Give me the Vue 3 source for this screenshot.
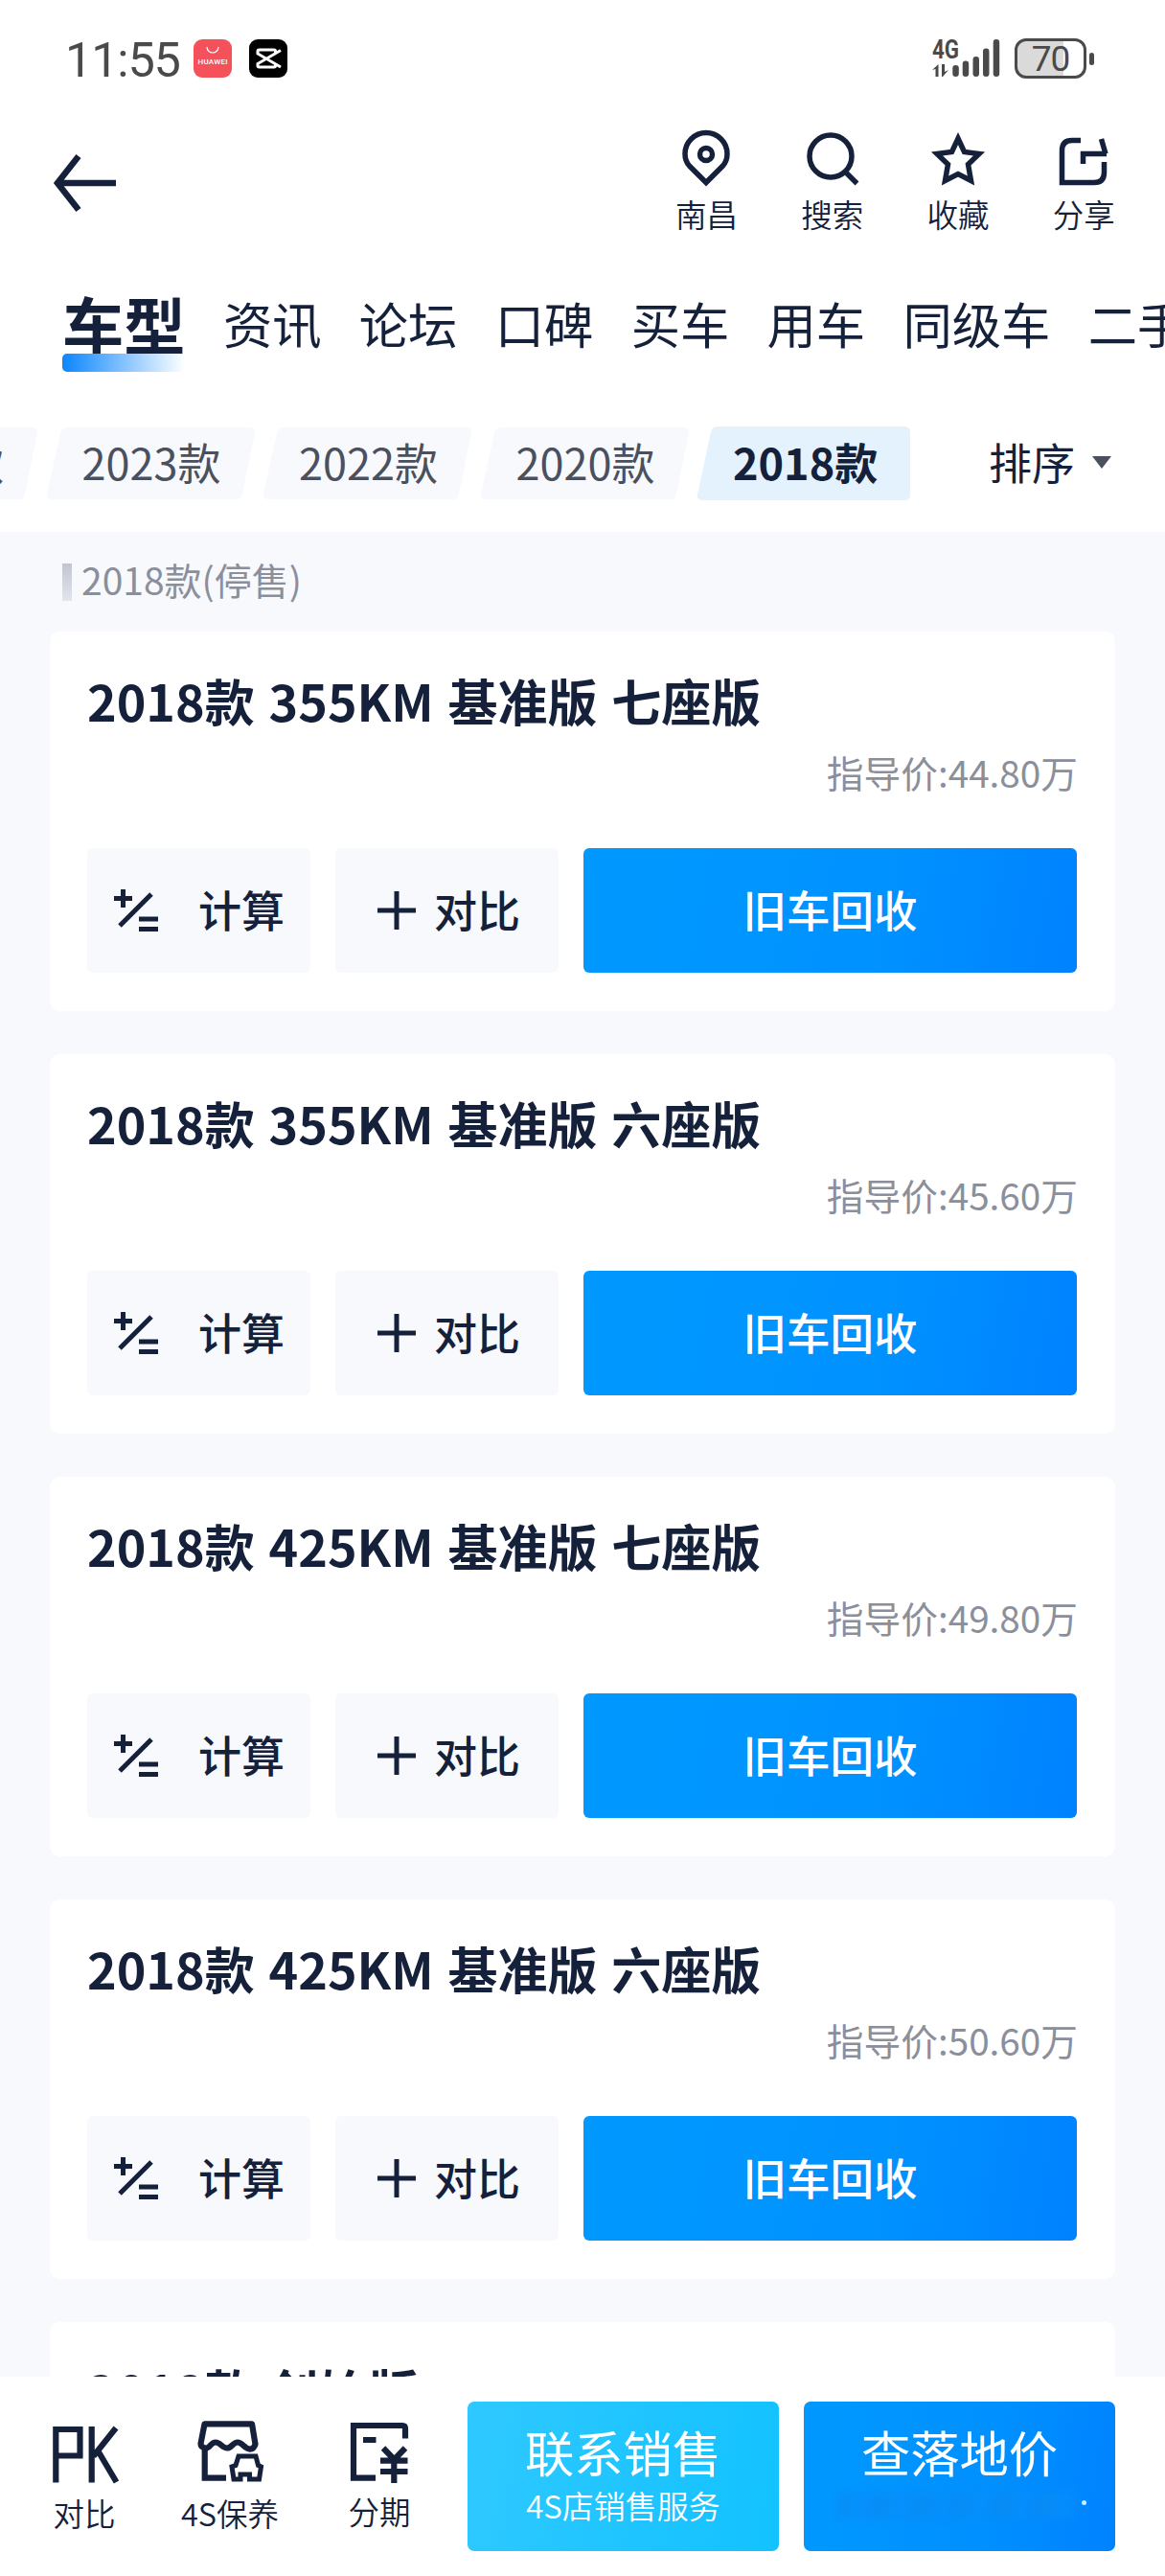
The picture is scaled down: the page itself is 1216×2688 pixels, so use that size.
<template>
  <div class="phone">
    <div class="status-bar">
      <div class="status-left">
        <span class="time">11:55</span>
        <svg class="app-icon" viewBox="0 0 40 40">
          <rect width="40" height="40" rx="9" fill="#f4515a" />
          <path d="M14 8a6 6 0 0 0 12 0" fill="none" stroke="#fff" stroke-width="1.2" />
          <text x="20" y="25.5" text-anchor="middle" textLength="31" class="huawei-text">HUAWEI</text>
        </svg>
        <svg class="app-icon second" viewBox="0 0 40 40">
          <rect width="40" height="40" rx="9" fill="#000" />
          <path d="M33 11.5L9 25.500V27.500Q9 29 10.500 29H26Q27.500 29 27.500 27.500V26M33 29L9 15V12.500Q9 11 10.500 11H26Q27.500 11 27.500 12.500V14" fill="none" stroke="#fff" stroke-width="3" />
        </svg>
      </div>
      <div class="status-right">
        <svg class="signal" viewBox="0 0 72 42">
          <text x="0" y="21" textLength="28" lengthAdjust="spacingAndGlyphs" class="net-text">4G</text>
          <path d="M0 33l6.500-6v13h-3v-8zM10 27h3v8l4-2-6 7h-1z" fill="#4a4a4a" />
          <rect x="21.300" y="28" width="6.500" height="12" rx="3.200" />
          <rect x="31.700" y="23.500" width="6.500" height="16.500" rx="3.200" />
          <rect x="42.500" y="19" width="6.500" height="21" rx="3.200" />
          <rect x="53" y="10.500" width="6.500" height="29.500" rx="3.200" />
          <rect x="63.700" y="1" width="6.500" height="39" rx="3.200" />
        </svg>
        <div class="battery">70</div>
        <i class="battery-nub"></i>
      </div>
    </div>

    <div class="nav-bar">
      <svg class="back" viewBox="0 0 68 60">
        <path d="M66 30H5M27 2L5 30l22 28" fill="none" stroke="#15203a" stroke-width="6.500" />
      </svg>
      <div class="nav-actions">
        <div class="nav-item">
          <svg viewBox="0 0 60 60">
            <path d="M30 54.500L12.500 37Q8 32 8 24.500a22 22 0 0 1 44 0Q52 32 47.500 37z" />
            <circle cx="30" cy="25" r="6.500" />
          </svg>
          <span>南昌</span>
        </div>
        <div class="nav-item">
          <svg viewBox="0 0 60 60">
            <circle cx="28" cy="27" r="22" />
            <path d="M43 43l12.500 12.500" />
          </svg>
          <span>搜索</span>
        </div>
        <div class="nav-item">
          <svg viewBox="0 0 60 60">
            <path d="M30 8.500l6.500 14 15.500 2-11.500 11 3 17L30 45.500l-13.500 7 3-17L8 24.500l15.500-2z" />
          </svg>
          <span>收藏</span>
        </div>
        <div class="nav-item">
          <svg viewBox="0 0 60 60">
            <path d="M27 10.500H18Q7.500 10.500 7.500 21v33.500H41Q51.500 54.500 51.500 44V33M29.500 35V24.500H54M48.500 9l4.500 15.500" />
          </svg>
          <span>分享</span>
        </div>
      </div>
    </div>

    <div class="tabs">
      <div
        v-for="tab in tabs"
        :key="tab"
        class="tab"
        :class="{ active: currentTab === tab }"
        @click="currentTab = tab">
        <span>{{ tab }}</span>
      </div>
    </div>

    <div class="filter-bar">
      <div class="years">
        <div
          v-for="year in years"
          :key="year"
          class="year"
          :class="{ active: currentYear === year }"
          @click="currentYear = year">
          <svg class="year-bg" viewBox="0 0 223 77">
            <path v-if="currentYear === year" d="M22 0H217Q223 0 223 6V71Q223 77 217 77H6Q0 77 1 71L15 6Q16 0 22 0z" />
            <path v-else d="M22 1H213Q219 1 218 7L205 70Q204 76 198 76H6Q0 76 1 70L15 7Q16 1 22 1z" />
          </svg>
          <span>{{ year }}</span>
        </div>
      </div>
      <div class="sort">
        <span>排序</span>
        <i class="caret"></i>
      </div>
    </div>

    <div class="list">
      <div class="group-title"><i></i><span>2018款(停售)</span></div>
      <div v-for="car in cars" :key="car.name" class="card">
        <h3>{{ car.name }}</h3>
        <div class="price">指导价:{{ car.price }}万</div>
        <div class="card-actions">
          <button class="btn-light">
            <svg class="calc" viewBox="0 0 46 46">
              <path d="M0 10.500h19M9.500 1v19M6 39L39 6M26 32h20M26 42.500h20" />
            </svg>
            <span>计算</span>
          </button>
          <button class="btn-light compare">
            <svg class="plus" viewBox="0 0 40 40">
              <path d="M0 20h40M20 0v40" />
            </svg>
            <span>对比</span>
          </button>
          <button class="btn-blue"><span>旧车回收</span></button>
        </div>
      </div>
    </div>

    <div class="bottom-bar">
      <div class="tool pk">
        <svg viewBox="0 0 70 68">
          <path d="M5.300 67.500V12H30.500v27.500H5.300M42.700 9v58.500M68 10.500L44.500 40M49 34l19.500 33" />
        </svg>
        <span>对比</span>
      </div>
      <div class="tool shop">
        <svg viewBox="0 0 70 68">
          <path d="M8.500 6.300H58L61.500 27.500Q60 33 55 32.500C50 31.500 48 25.500 43 25.500S37 31.500 32 31.500 25 25.500 20 25.500 14 32 10 31.500Q4.500 31 4.500 27z" stroke-linejoin="round" />
          <path d="M8.700 31v31.700H31" />
          <path d="M44 40h18l2.500 9.500 3 1.500-2 13H55.500v-5H46v5h-7l-2-13 4-1.500z" stroke-width="5" />
        </svg>
        <span>4S保养</span>
      </div>
      <div class="tool stage">
        <svg viewBox="0 0 70 68">
          <path d="M31 62.700H8V8H59q3 0 3 3v10.500M18 23h13.500M39 31.500l11.500 12 11.500-12M36 44.700h28.500M36 56h28.500M50.300 43v25" />
        </svg>
        <span>分期</span>
      </div>
      <button class="cta cyan">
        <b>联系销售</b>
        <small>4S店销售服务</small>
      </button>
      <button class="cta blue">
        <b>查落地价</b>
        <span class="sub-line"><i class="smudge"></i><i class="speck"></i></span>
      </button>
    </div>
  </div>
</template>

<script setup>
import { ref } from 'vue'

const currentTab = ref('车型')
const currentYear = ref('2018款')

const tabs = ['车型', '资讯', '论坛', '口碑', '买车', '用车', '同级车', '二手车']
const years = ['2024款', '2023款', '2022款', '2020款', '2018款']

const cars = [
  { name: '2018款 355KM 基准版 七座版', price: '44.80' },
  { name: '2018款 355KM 基准版 六座版', price: '45.60' },
  { name: '2018款 425KM 基准版 七座版', price: '49.80' },
  { name: '2018款 425KM 基准版 六座版', price: '50.60' },
  { name: '2018款 创始版', price: '62.80' }
]
</script>

<style>
body {
  margin: 0;
  background: #fff;
}
</style>

<style scoped>
* {
  box-sizing: border-box;
}
.phone {
  width: 1216px;
  height: 2688px;
  overflow: hidden;
  display: flex;
  flex-direction: column;
  background: #fff;
  color: #15203a;
  font-family: "Noto Sans CJK SC", sans-serif;
}
svg {
  display: block;
  overflow: visible;
  flex-shrink: 0;
}
button {
  border: none;
  padding: 0;
  font-family: inherit;
  color: inherit;
  cursor: pointer;
}
.status-bar {
  height: 122px;
  flex-shrink: 0;
  padding: 0 74px 0 68px;
  display: flex;
  align-items: center;
  justify-content: space-between;
  color: #4a4a4a;
}
.status-left, .status-right {
  display: flex;
  align-items: center;
}
.time {
  width: 134px;
  padding-top: 3px;
  font-family: Roboto, sans-serif;
  font-size: 50.5px;
  line-height: 60px;
  letter-spacing: -1.2px;
}
.app-icon {
  width: 40px;
  height: 40px;
}
.app-icon.second {
  margin-left: 18px;
}
.huawei-text {
  font: 500 8px Roboto, sans-serif;
  fill: #fff;
}
.signal {
  width: 72px;
  height: 42px;
  fill: #4a4a4a;
}
.net-text {
  font: 700 27px Roboto, sans-serif;
}
.battery {
  width: 75px;
  height: 42px;
  margin-left: 14px;
  border: 3.5px solid #4a4a4a;
  border-radius: 12px;
  background: linear-gradient(90deg, #dadada 69%, #fff 69%);
  font: 400 37px/37px Roboto, sans-serif;
  letter-spacing: -1px;
  text-align: center;
}
.battery-nub {
  width: 5px;
  height: 13px;
  margin-left: 3px;
  border-radius: 3px;
  background: #4a4a4a;
}
.nav-bar {
  height: 158px;
  flex-shrink: 0;
  padding: 8px 19px 0 55px;
  display: flex;
  justify-content: space-between;
}
.back {
  width: 68px;
  height: 60px;
  margin-top: 31px;
}
.nav-actions {
  display: flex;
}
.nav-item {
  width: 131.3px;
  display: flex;
  flex-direction: column;
  align-items: center;
}
.nav-item svg {
  width: 60px;
  height: 60px;
  margin-top: 6px;
  fill: none;
  stroke: #15203a;
  stroke-width: 5.5;
}
.nav-item span {
  margin-top: 4px;
  font-size: 32.5px;
  font-weight: 350;
  line-height: 46px;
}
.tabs {
  height: 150px;
  flex-shrink: 0;
  padding: 17px 0 0 65px;
  display: flex;
  gap: 39.3px;
  white-space: nowrap;
}
.tab {
  font-size: 51.3px;
  line-height: 80px;
  flex-shrink: 0;
}
.tab.active {
  font-size: 64.3px;
  font-weight: 700;
}
.tab.active::after {
  content: "";
  display: block;
  position: relative;
  top: -8px;
  width: 128px;
  height: 19px;
  border-radius: 5px;
  background: linear-gradient(90deg, #0a86ff, #fff);
}
.filter-bar {
  height: 125px;
  flex-shrink: 0;
  padding-top: 15px;
  display: flex;
}
.years {
  width: 950px;
  display: flex;
  justify-content: flex-end;
  gap: 3.5px;
}
.year {
  width: 223px;
  height: 77px;
  flex-shrink: 0;
  display: grid;
  color: #4b505f;
  font-size: 45px;
  line-height: 73px;
}
.year-bg, .year span {
  grid-area: 1 / 1;
}
.year span {
  padding-left: 38px;
}
.year-bg {
  width: 223px;
  height: 77px;
  fill: #f7f9fd;
}
.year.active {
  color: #15203a;
  font-weight: 700;
}
.year.active .year-bg {
  fill: #e4f2fe;
}
.sort {
  height: 73px;
  margin-left: 82px;
  display: flex;
  align-items: center;
  font-size: 45px;
}
.caret {
  margin: 2px 0 0 18px;
  border: 10px solid transparent;
  border-top: 13px solid #4b505f;
  border-bottom: none;
}
.list {
  flex: 1;
  min-height: 0;
  overflow: hidden;
  padding: 0 52px;
  background: #f7f9fd;
}
.group-title {
  height: 104px;
  padding-left: 13px;
  display: flex;
  align-items: center;
  color: #8b8f9c;
  font-size: 39px;
}
.group-title i {
  width: 10px;
  height: 39px;
  margin-right: 10px;
  background: linear-gradient(#c2c5d0, #e3e5ec);
}
.group-title span {
  margin-bottom: 7px;
}
.card {
  height: 396px;
  margin-bottom: 45px;
  padding: 35px 39px 0;
  border-radius: 10px;
  background: #fff;
}
h3 {
  margin: 0;
  font-size: 52px;
  font-weight: 700;
  line-height: 74px;
  word-spacing: 3px;
  white-space: nowrap;
}
.price {
  margin-top: 9px;
  color: #8b8f9c;
  font-size: 38.7px;
  line-height: 56px;
  text-align: right;
}
.card-actions {
  margin-top: 52px;
  display: flex;
  gap: 26px;
}
.btn-light {
  width: 233px;
  height: 130px;
  padding-left: 28px;
  display: flex;
  align-items: center;
  border-radius: 6px;
  background: #f7f9fd;
  font-size: 45px;
  font-weight: 500;
}
.btn-light span, .btn-blue span {
  display: block;
  margin-bottom: 4px;
}
.btn-light svg {
  fill: none;
  stroke: #15203a;
  stroke-width: 5;
}
.calc {
  width: 46px;
  height: 46px;
  margin-right: 42px;
}
.compare {
  padding-left: 44px;
}
.plus {
  width: 40px;
  height: 40px;
  margin-right: 19px;
}
.btn-blue {
  width: 515px;
  height: 130px;
  border-radius: 6px;
  background: linear-gradient(100deg, #0099ff, #0092ff 60%, #0082ff);
  color: #fff;
  font-size: 45.5px;
  font-weight: 500;
}
.bottom-bar {
  height: 208px;
  flex-shrink: 0;
  padding: 26px 52px 0 38px;
  display: flex;
  background: #fff;
}
.tool {
  display: flex;
  flex-direction: column;
  align-items: center;
  padding-top: 17px;
}
.tool svg {
  width: 70px;
  height: 68px;
  fill: none;
  stroke: #15203a;
  stroke-width: 6.2;
}
.tool span {
  margin-top: 8px;
  font-size: 32.5px;
  font-weight: 350;
  line-height: 46px;
}
.tool.stage span {
  margin-top: 6px;
}
.pk {
  width: 100px;
}
.shop {
  width: 204px;
}
.stage {
  width: 108px;
}
.cta {
  width: 325px;
  height: 156px;
  margin-left: 26px;
  padding-top: 15px;
  display: flex;
  flex-direction: column;
  align-items: center;
  flex-shrink: 0;
  border-radius: 7px;
  color: #fff;
}
.cta.cyan {
  margin-left: 38px;
  background: linear-gradient(100deg, #2fc8ff, #12c2ff);
}
.cta.blue {
  background: linear-gradient(100deg, #0099ff, #0090ff 60%, #0082ff);
}
.cta b {
  font-size: 51.3px;
  font-weight: 400;
  line-height: 74px;
}
.cta small {
  margin-top: -4px;
  font-size: 33px;
  line-height: 46px;
  font-weight: 350;
}
.sub-line {
  display: flex;
  margin-top: 5px;
  padding-left: 5px;
}
.smudge {
  width: 250px;
  height: 28px;
  background: repeating-linear-gradient(105deg, #0a8cf2 0 14px, #088ffc 22px 30px, #0a88f2 41px);
  filter: blur(5px);
  opacity: 0.7;
}
.speck {
  width: 5px;
  height: 5px;
  margin: 9px 0 0 5px;
  border-radius: 50%;
  background: #c8f4ff;
}
</style>
